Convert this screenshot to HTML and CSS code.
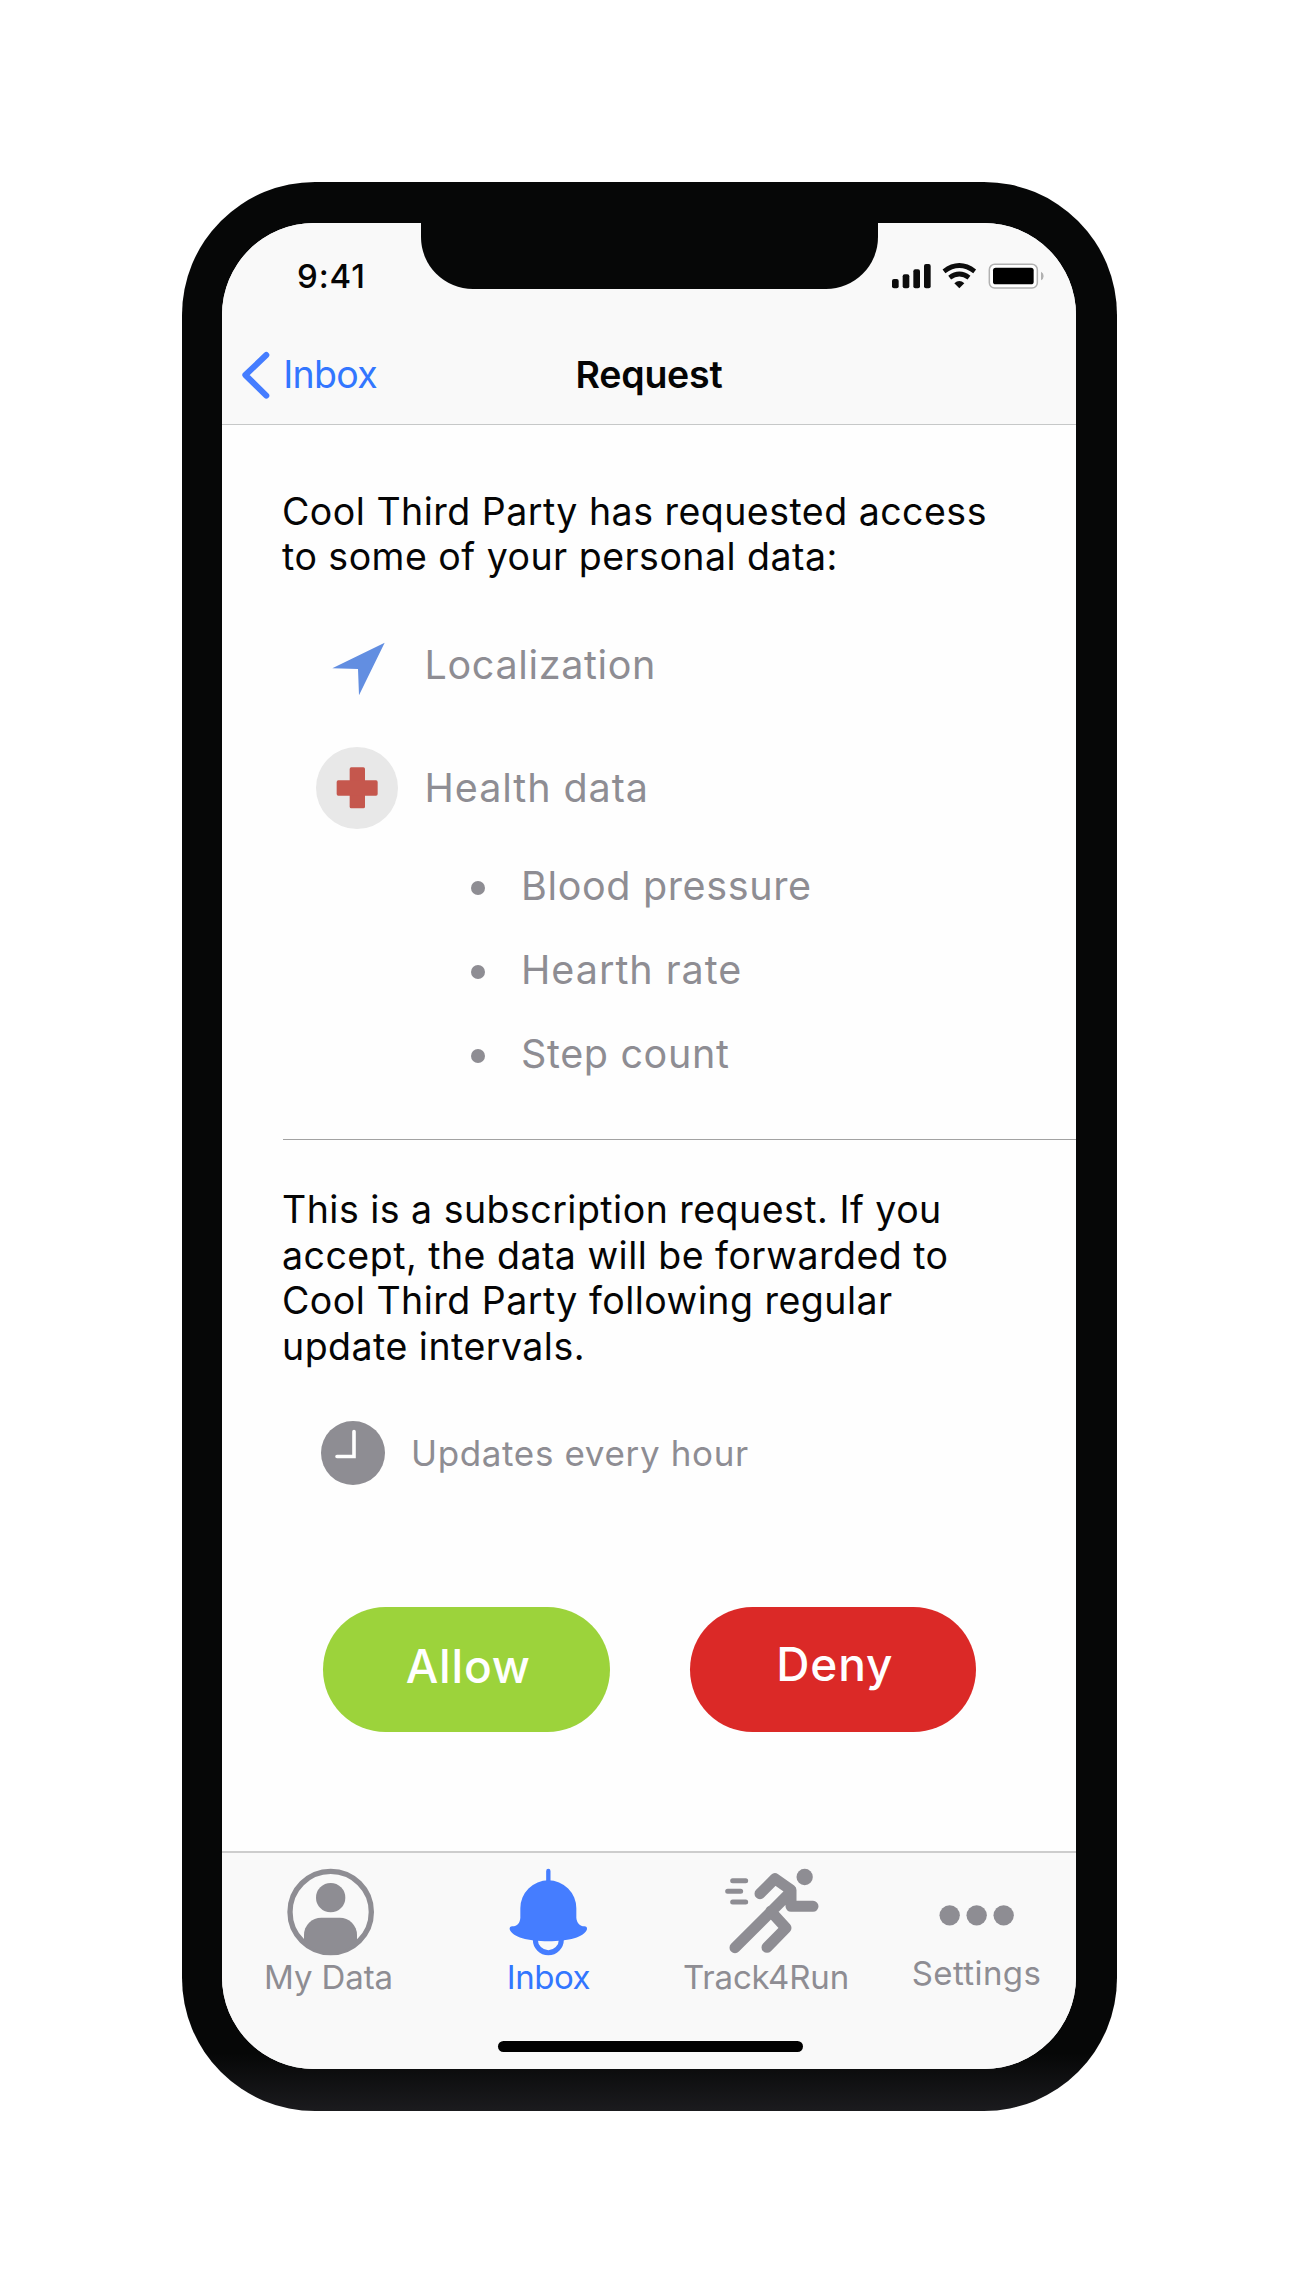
FILE: index.html
```html
<!DOCTYPE html>
<html lang="en">
<head>
<meta charset="utf-8">
<title>Request</title>
<link rel="stylesheet" href="styles.css">
</head>
<body>
<main class="phone">
  <div class="screen">
    <div class="notch"></div>
    <header class="header">
      <div class="status">
        <span class="time">9:41</span>
        <svg class="status-icons" viewBox="720 276 465 84" width="155" height="28">
          <g fill="#0c0c0c">
            <rect x="726" y="327" width="20" height="28" rx="6"/>
            <rect x="758" y="313" width="20" height="42" rx="6"/>
            <rect x="790" y="298" width="20" height="57" rx="6"/>
            <rect x="822" y="282" width="20" height="73" rx="6"/>
            <path d="M928 355 L913 340 Q928 326 943 340 Z"/>
          </g>
          <g fill="none" stroke="#0c0c0c" stroke-width="14">
            <path d="M882 304 Q928 269 974 304"/>
            <path d="M899 323 Q928 301 957 323"/>
          </g>
          <rect x="1018" y="283" width="144" height="71" rx="16" fill="#fff" stroke="#b1b1b1" stroke-width="4.5"/>
          <rect x="1029" y="293" width="122" height="50" rx="8" fill="#000"/>
          <path d="M1173 305 Q1181 309 1181 318 Q1181 327 1173 331 Z" fill="#b1b1b1"/>
        </svg>
      </div>
      <nav class="nav">
        <a class="back">
          <svg viewBox="214 537 88 144" width="29.3" height="48"><path d="M290 549 L227 609 L290 671" fill="none" stroke="#457dff" stroke-width="18" stroke-linecap="round" stroke-linejoin="round"/></svg>
          <span class="back-label">Inbox</span>
        </a>
        <h1 class="title">Request</h1>
      </nav>
    </header>

    <section class="content">
      <p class="text">Cool Third Party has requested access<br>to some of your personal data:</p>
      <ul class="scopes">
        <li class="scope location">
          <svg viewBox="138 460 246 246" width="82" height="82"><path d="M187 593 L344 516 L267 674 L264 595 Z" fill="#628ee1"/></svg>
          <span>Localization</span>
        </li>
        <li class="scope health">
          <svg viewBox="138 830 246 246" width="82" height="82"><circle cx="261" cy="953" r="123" fill="#e8e8e8"/><g fill="#c5574d"><rect x="239" y="891" width="46" height="123" rx="5"/><rect x="200" y="930" width="123" height="46" rx="5"/></g></svg>
          <span>Health data</span>
        </li>
      </ul>
      <ul class="details">
        <li class="pressure">Blood pressure</li>
        <li class="heart">Hearth rate</li>
        <li class="steps">Step count</li>
      </ul>
      <hr class="divider">
      <p class="text">This is a subscription request. If you<br>accept, the data will be forwarded to<br>Cool Third Party following regular<br>update intervals.</p>
      <div class="schedule">
        <svg viewBox="0 0 64 64" width="64" height="64"><circle cx="32" cy="32" r="32" fill="#8e8d93"/><path d="M33 10.5 V35.5 H16" fill="none" stroke="#fff" stroke-width="3.6" stroke-linecap="round"/></svg>
        <span>Updates every hour</span>
      </div>
      <div class="actions">
        <button class="btn allow">Allow</button>
        <button class="btn deny">Deny</button>
      </div>
    </section>

    <footer class="footer">
      <nav class="tabs">
        <a class="tab my-data">
          <svg viewBox="311 113 330 264" width="110" height="88"><circle cx="481" cy="245" r="122" fill="none" stroke="#8e8d93" stroke-width="16"/><circle cx="481" cy="202" r="44" fill="#8e8d93"/><path d="M401 338 V314 A52 52 0 0 1 453 262 H508 A52 52 0 0 1 560 314 V338 A122 122 0 0 1 401 338 Z" fill="#8e8d93"/></svg>
          <span>My Data</span>
        </a>
        <a class="tab active">
          <svg viewBox="972 113 330 264" width="110" height="88"><g fill="none" stroke="#457dff"><path d="M1135 122 V160" stroke-width="13" stroke-linecap="round"/><path d="M1096 322 V328 A39 39 0 0 0 1174 328 V322" stroke-width="15"/></g><path d="M1051 234 A84 84 0 0 1 1219 234 V262 C1220 277 1230 288 1243 288 Q1252 288 1251 297 C1243 321 1196 333 1135 333 C1074 333 1027 321 1019 297 Q1018 288 1027 288 C1042 288 1050 277 1051 262 Z" fill="#457dff"/></svg>
          <span>Inbox</span>
        </a>
        <a class="tab run">
          <svg viewBox="185 113 330 264" width="110" height="88"><circle cx="466" cy="140" r="24.5" fill="#8e8d93"/><g fill="none" stroke="#8e8d93" stroke-linecap="round" stroke-linejoin="round"><path d="M250 151 H289 M235 183 H274 M250 215 H289" stroke-width="15"/><path d="M332 190 L377 145 L425 179 V228 H491 M425 184 L257 352 M364 243 L410 293 L353 351" stroke-width="33"/></g></svg>
          <span>Track4Run</span>
        </a>
        <a class="tab settings">
          <svg viewBox="818 113 330 264" width="110" height="88"><g fill="#8e8d93"><circle cx="901" cy="255" r="30.5"/><circle cx="982" cy="255" r="30.5"/><circle cx="1063" cy="255" r="30.5"/></g></svg>
          <span>Settings</span>
        </a>
      </nav>
      <div class="home-bar"></div>
    </footer>
  </div>
</main>
</body>
</html>
```
FILE: styles.css
```css
* { box-sizing: border-box; }

body {
  margin: 0;
  padding: 182px 183px 181px 182px;
  background: #fff;
  font-family: Inter, "Liberation Sans", sans-serif;
  color: #050505;
}

h1, p, ul { margin: 0; padding: 0; font-weight: inherit; }
ul { list-style: none; }
svg { display: block; flex: none; }

.phone {
  width: 935px;
  height: 1929px;
  padding: 41px 41px 42px 40px;
  border-radius: 133px;
  background: linear-gradient(#060707 0, #060707 97%, #1b1b1e 100%);
}

.screen {
  position: relative;
  display: flex;
  flex-direction: column;
  height: 1846px;
  border-radius: 92px;
  overflow: hidden;
  background: #fefefe;
}

.notch {
  position: absolute;
  top: -1px;
  left: 199px;
  width: 457px;
  height: 67px;
  border-radius: 0 0 52px 52px;
  background: #060707;
}

.header {
  height: 202px;
  background: #f9f9f9;
  border-bottom: 1px solid #c6c8c8;
}

.status {
  display: flex;
  justify-content: space-between;
  height: 102px;
  padding: 33px 31px 0 75px;
}
.time { font-size: 33px; line-height: 40px; font-weight: 500; letter-spacing: 0.9px; }
.status-icons { margin-top: 6px; }

.nav {
  display: grid;
  grid-template-columns: 1fr auto 1fr;
  align-items: center;
  height: 99px;
}
.back { display: flex; align-items: center; gap: 13px; padding-left: 19px; color: #3276ff; }
.back-label { font-size: 37.5px; line-height: 46px; letter-spacing: -0.75px; }
.title { font-size: 37.5px; line-height: 46px; font-weight: 600; letter-spacing: -0.25px; }

.content { display: flex; flex-direction: column; height: 1426px; padding: 63.5px 0 0 61px; }

.text { margin-left: -1px; font-size: 37.5px; line-height: 45.5px; letter-spacing: 0.48px; }

.scopes { display: grid; gap: 41px; margin: 44.5px 0 0 33px; }
.scope { display: flex; align-items: center; gap: 26.5px; height: 82px; font-size: 39.5px; color: #8e8d93; }
.location { letter-spacing: 0.65px; }
.health { letter-spacing: 0.93px; }

.details { margin: 15px 0 0 188px; font-size: 39.5px; line-height: 84px; color: #8e8d93; }
.details li { display: flex; align-items: center; gap: 36px; }
.details li::before { content: ""; width: 14px; height: 14px; border-radius: 50%; background: #8e8d93; margin-top: 4px; }
.pressure, .steps { letter-spacing: 0.64px; }
.heart { letter-spacing: 0.99px; }

.divider { width: 100%; height: 0; margin: 43px 0 47px; border: 0; border-top: 1px solid #a2a2a2; }

.schedule { display: flex; align-items: center; gap: 26px; margin: 52px 0 0 38px; font-size: 35px; letter-spacing: 0.64px; color: #8e8d93; }

.actions { display: flex; gap: 80px; margin: 121.5px 0 0 40px; }
.btn {
  width: 286.5px;
  height: 125.5px;
  padding: 0 0 6px 4px;
  border: 0;
  border-radius: 63px;
  color: #fff;
  font: 500 46px/56px Inter, "Liberation Sans", sans-serif;
  letter-spacing: 0.85px;
}
.allow { background: #9cd33b; }
.deny { padding-bottom: 10px; background: #db2927; }

.footer { height: 218px; border-top: 2px solid #cdcdcd; background: #f9f9f9; }
.tabs { display: grid; grid-template-columns: 213px 227px 208px 213px; padding-top: 15px; }
.tab { display: flex; flex-direction: column; align-items: center; gap: 1px; font-size: 33px; line-height: 40px; color: #8e8d93; }
.my-data { letter-spacing: -0.1px; }
.tab.active { color: #3276ff; letter-spacing: -0.45px; }
.run { letter-spacing: -0.15px; }
.settings { letter-spacing: 0.4px; }
.settings span { margin-top: -4px; }
.home-bar { width: 305px; height: 11px; margin: 44px 0 0 276px; border-radius: 6px; background: #000; }
```
